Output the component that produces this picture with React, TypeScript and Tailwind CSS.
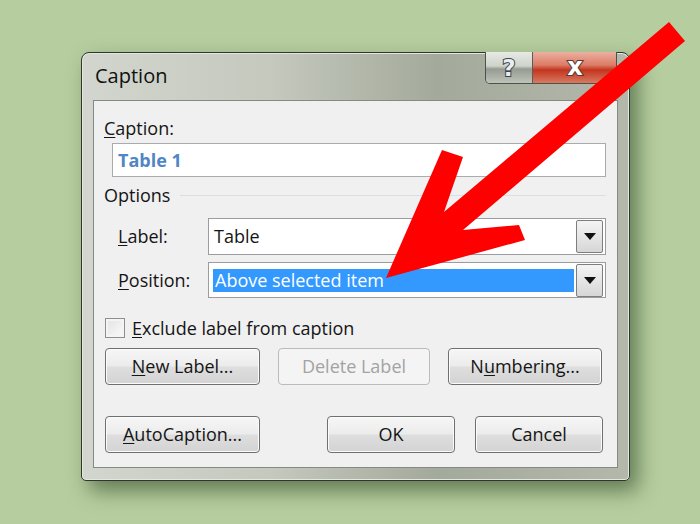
import React from "react";

const font = { fontFamily: '"Open Sans", "Noto Sans", sans-serif' };

function Btn({ children, w, disabled, ml }: { children: React.ReactNode; w: string; disabled?: boolean; ml: string }) {
  return (
    <div
      className={`${w} ${ml} h-[37px] rounded-[4px] border flex items-center justify-center text-[18px] ${
        disabled
          ? "border-[#b8bcbf] bg-[#f4f4f4] text-[#a3a3a3]"
          : "border-[#6f716e] bg-[linear-gradient(to_bottom,#f6f6f6_0%,#ececec_48%,#dedede_52%,#d3d3d3_100%)] text-[#151515] shadow-[inset_0_0_0_1px_#fbfbfb]"
      }`}
    >
      {children}
    </div>
  );
}

function DropBtn() {
  return (
    <div className="w-[27px] h-[33px] mr-[2px] rounded-[2px] border border-[#7d7f7c] bg-[linear-gradient(to_bottom,#f4f4f4,#e6e6e6_50%,#d6d6d6)] flex items-center justify-center">
      <div className="w-0 h-0 border-l-[6px] border-r-[6px] border-t-[7px] border-l-transparent border-r-transparent border-t-[#111]" />
    </div>
  );
}

export default function App() {
  return (
    <div className="relative w-[700px] h-[524px] overflow-hidden bg-[#b6cd9f] pt-[52px] pl-[81px]" style={font}>
      <div className="relative w-[549px] h-[429px] flex flex-col rounded-t-[8px] rounded-b-[5px] border border-[#30362d] bg-[linear-gradient(to_right,#d3d6ce_0%,#c4c8bd_35%,#a3a99b_65%,#b3b8ab_100%)] shadow-[8px_10px_20px_rgba(45,70,35,0.6),inset_0_0_0_1px_#e4e7df]">
        {/* title bar */}
        <div className="h-[47px] flex items-start justify-between">
          <div className="pl-[13px] pt-[9px] text-[20px] text-[#111] leading-[28px]">Caption</div>
          <div className="flex mr-[12px] -mt-[1px] h-[32px] rounded-b-[5px] border border-t-0 border-[#4d5249] overflow-hidden">
            <div className="w-[47px] h-full flex items-center justify-center bg-[linear-gradient(to_bottom,#e7e9e4_0%,#d0d3cc_45%,#969c91_55%,#bfc3ba_100%)] border-r border-[#5a5f56]">
              <svg width="26" height="30" viewBox="0 0 26 30">
                <text x="13" y="23" textAnchor="middle" fontSize="23" fontWeight="bold" fontFamily="'DejaVu Sans', sans-serif" fill="#e9edf0" stroke="#3d434a" strokeWidth="2" paintOrder="stroke">?</text>
              </svg>
            </div>
            <div className="w-[83px] h-full flex items-center justify-center bg-[linear-gradient(to_bottom,#eab0a0_0%,#dc7c66_42%,#c2351e_58%,#d97a62_100%)]">
              <svg width="30" height="30" viewBox="0 0 30 30">
                <text x="15" y="22" textAnchor="middle" fontSize="24" fontWeight="bold" fontFamily="'DejaVu Sans', sans-serif" fill="#ffffff" stroke="#5a3a30" strokeWidth="2" paintOrder="stroke">x</text>
              </svg>
            </div>
          </div>
        </div>
        {/* client area */}
        <div className="mx-[11px] mb-[12px] flex-1 border border-[#848a80] bg-[#f0f0f0] flex flex-col text-[18px] text-[#151515]">
          <div className="mt-[15px] ml-[10px] h-[24px] leading-[24px]">
            <span className="underline underline-offset-2 decoration-1">C</span>aption:
          </div>
          <div className="mt-[3px] ml-[18px] mr-[11px] h-[34px] border border-[#a9abaf] bg-white flex items-center pl-[5px]">
            <span className="font-bold text-[18px] text-[#4f86c5]">Table 1</span>
          </div>
          <div className="mt-[6px] h-[24px] flex items-center">
            <span className="ml-[10px]">Options</span>
            <div className="flex-1 ml-[10px] mr-[11px] h-px bg-[#d9dfe2]" />
          </div>
          <div className="mt-[11px] h-[37px] flex items-center">
            <div className="ml-[24px] w-[90px]">
              <span className="underline underline-offset-2 decoration-1">L</span>abel:
            </div>
            <div className="flex-1 mr-[11px] h-full border border-[#9a9c9f] bg-white flex items-center justify-between">
              <span className="pl-[5px]">Table</span>
              <DropBtn />
            </div>
          </div>
          <div className="mt-[7px] h-[36px] flex items-center">
            <div className="ml-[24px] w-[90px]">
              <span className="underline underline-offset-2 decoration-1">P</span>osition:
            </div>
            <div className="flex-1 mr-[11px] h-full border border-[#9a9c9f] bg-white flex items-center">
              <div className="ml-[4px] flex-1 h-[23px] bg-[#3399ff] text-white flex items-center pl-[2px]">Above selected item</div>
              <div className="ml-[2px]">
                <DropBtn />
              </div>
            </div>
          </div>
          <div className="mt-[20px] h-[20px] flex items-center">
            <div className="ml-[11px] w-[20px] h-[20px] border border-[#8e8f8f] bg-[linear-gradient(135deg,#e2e2e2,#fbfbfb)] shadow-[inset_0_0_0_2px_#f4f4f4]" />
            <span className="ml-[7px]">
              <span className="underline underline-offset-2 decoration-1">E</span>xclude label from caption
            </span>
          </div>
          <div className="mt-[10px] flex">
            <Btn w="w-[155px]" ml="ml-[11px]">
              <span>
                <span className="underline underline-offset-2 decoration-1">N</span>ew Label...
              </span>
            </Btn>
            <Btn w="w-[152px]" ml="ml-[18px]" disabled>
              Delete Label
            </Btn>
            <Btn w="w-[154px]" ml="ml-[18px]">
              <span>
                N<span className="underline underline-offset-2 decoration-1">u</span>mbering...
              </span>
            </Btn>
          </div>
          <div className="mt-[31px] flex">
            <Btn w="w-[155px]" ml="ml-[11px]">
              <span>
                <span className="underline underline-offset-2 decoration-1">A</span>utoCaption...
              </span>
            </Btn>
            <Btn w="w-[128px]" ml="ml-[67px]">
              OK
            </Btn>
            <Btn w="w-[128px]" ml="ml-[20px]">
              Cancel
            </Btn>
          </div>
        </div>
      </div>
      {/* red arrow overlay */}
      <svg className="absolute left-0 top-0 pointer-events-none" width="700" height="524" viewBox="0 0 700 524">
        <polygon
          fill="#fe0000"
          points="669,22 685,41 463,230 519,225 525,240 386,278 442,150 463,157 444,212"
        />
      </svg>
    </div>
  );
}
